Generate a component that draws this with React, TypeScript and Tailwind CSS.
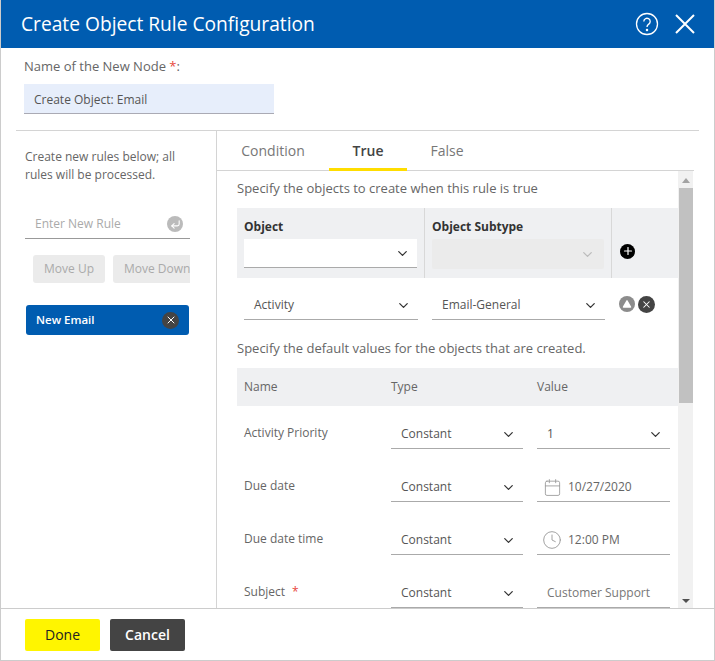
import React from "react";
import { ChevronDown, X, Calendar, Clock, CornerDownLeft, Plus, Triangle } from "lucide-react";

const rows = [
  { name: "Activity Priority", kind: "select", value: "1" },
  { name: "Due date", kind: "date", value: "10/27/2020" },
  { name: "Due date time", kind: "time", value: "12:00 PM" },
  { name: "Subject", kind: "text", value: "Customer Support", required: true },
];

const Select = ({ value, className }: { value?: string; className: string }) => (
  <div className={`flex h-[29px] items-center justify-between border-b border-[#aaaaaa] pl-[10px] pr-[7px] text-[12px] text-[#555555] ${className}`}>
    <span>{value}</span>
    <ChevronDown size={15} strokeWidth={2} className="text-[#333333]" />
  </div>
);

const App = () => {
  return (
    <div className="flex h-[661px] w-[715px] flex-col border-x border-b border-[#cccccc] bg-white font-['Open_Sans',sans-serif] text-[#555555]">
      {/* header */}
      <div className="flex h-[48px] shrink-0 items-center justify-between bg-[#005cb0] pl-[20px] pr-[19px] text-white">
        <h1 className="text-[19.2px] leading-none">Create Object Rule Configuration</h1>
        <div className="flex items-center gap-[16px]">
          <svg width="24" height="24" viewBox="0 0 24 24" fill="none" stroke="white" strokeWidth="1.3">
            <circle cx="12" cy="12" r="10.5" />
            <path d="M8.8 9.4a3.2 3.2 0 1 1 5 2.7c-1.2.8-1.8 1.4-1.8 2.9" />
            <circle cx="12" cy="18" r=".6" fill="white" />
          </svg>
          <svg width="20" height="20" viewBox="0 0 20 20" fill="none" stroke="white" strokeWidth="2">
            <path d="M1 1l18 18M19 1L1 19" />
          </svg>
        </div>
      </div>

      {/* node name */}
      <div className="h-[82px] shrink-0 pl-[23px] pt-[9px]">
        <div className="text-[13px] leading-[18px] text-[#666666]">
          Name of the New Node <span className="text-[#e8483b]">*</span>:
        </div>
        <div className="mt-[9px] flex h-[30px] w-[250px] items-center border-b border-[#aaaab4] bg-[#e7eefb] pl-[10px] pt-[2px] text-[12px] text-[#555555]">
          Create Object: Email
        </div>
      </div>

      <div className="ml-[15px] mr-[15px] flex min-h-0 flex-1 border-t border-[#d4d4d4]">
        {/* rules */}
        <div className="w-[201px] shrink-0 border-r border-[#d4d4d4] pl-[9px] pt-[17px]">
          <p className="w-[165px] text-[12px] leading-[18px] text-[#666666]">
            Create new rules below; all rules will be processed.
          </p>
          <div className="mt-[22px] flex h-[33px] w-[165px] items-center justify-between border-b border-[#999999] pl-[10px] pr-[7px] pt-[4px] text-[12px] text-[#aaaaaa]">
            <span>Enter New Rule</span>
            <span className="flex h-[16px] w-[16px] items-center justify-center rounded-full bg-[#bbbbbb]">
              <CornerDownLeft size={11} strokeWidth={2.4} className="text-white" />
            </span>
          </div>
          <div className="mt-[16px] flex w-[165px] gap-[8px] overflow-hidden pl-[8px] text-[12px] text-[#aaaaaa]">
            <div className="flex h-[28px] w-[72px] shrink-0 items-center justify-center rounded-[3px] bg-[#ebebeb]">Move Up</div>
            <div className="flex h-[28px] w-[85px] shrink-0 items-center whitespace-nowrap rounded-[3px] bg-[#ebebeb] pl-[11px]">Move Down</div>
          </div>
          <div className="ml-[1px] mt-[22px] flex h-[30px] w-[163px] items-center justify-between rounded-[3px] bg-[#005cb0] pl-[10px] pr-[10px] text-[11.5px] font-semibold text-white">
            <span>New Email</span>
            <span className="flex h-[17px] w-[17px] items-center justify-center rounded-full bg-[#444444]">
              <X size={12} strokeWidth={2} />
            </span>
          </div>
        </div>

        {/* tabs and content */}
        <div className="flex w-[476px] min-w-0 flex-col">
          <div className="flex h-[40px] w-[477px] shrink-0 border-b border-[#d4d4d4] text-[14px] text-[#777777]">
            <div className="flex h-[40px] w-[112px] items-center justify-center pb-[2px]">Condition</div>
            <div className="flex h-[40px] w-[78px] items-center justify-center border-b-[3px] border-[#ffdd00] pt-[1px] font-semibold text-[#444444]">True</div>
            <div className="flex h-[40px] w-[82px] items-center justify-center pb-[2px] pr-[2px]">False</div>
          </div>

          <div className="flex min-h-0 flex-1">
            <div className="min-w-0 flex-1 overflow-hidden pl-[20px] text-[12px]">
              <p className="h-[37px] pt-[8px] text-[13px] leading-[18px] text-[#666666]">Specify the objects to create when this rule is true</p>
              {/* object header */}
              <div className="flex h-[70px] bg-[#eff0f2]">
                <div className="w-[188px] border-r border-[#d8d8d8] pl-[7px] pt-[10px]">
                  <div className="text-[12px] font-bold leading-[17px] text-[#333333]">Object</div>
                  <Select className="mt-[4px] w-[173px] border-[#999999] bg-white" />
                </div>
                <div className="w-[187px] border-r border-[#d8d8d8] pl-[7px] pt-[10px]">
                  <div className="text-[12px] font-bold leading-[17px] text-[#333333]">Object Subtype</div>
                  <div className="mt-[4px] flex h-[30px] w-[172px] items-center justify-end rounded-[2px] bg-[#ebebeb] pr-[9px]">
                    <ChevronDown size={15} className="text-[#bbbbbb]" />
                  </div>
                </div>
                <div className="flex flex-1 items-center pl-[8px] pt-[16px]">
                  <span className="flex h-[15px] w-[15px] items-center justify-center rounded-full bg-black">
                    <Plus size={12} strokeWidth={2.4} className="text-white" />
                  </span>
                </div>
              </div>
              {/* object row */}
              <div className="flex h-[43px] items-end pb-[1px] pl-[7px]">
                <Select value="Activity" className="w-[174px]" />
                <Select value="Email-General" className="ml-[14px] w-[173px]" />
                <div className="mb-[7px] ml-[14px] flex gap-[3px]">
                  <span className="flex h-[16px] w-[16px] items-center justify-center rounded-full bg-[#8c8c8c]">
                    <Triangle size={10} fill="white" strokeWidth={0} />
                  </span>
                  <span className="flex h-[17px] w-[17px] items-center justify-center rounded-full bg-[#444444] text-white">
                    <X size={11} strokeWidth={2.2} />
                  </span>
                </div>
              </div>
              <p className="h-[47px] pt-[18px] text-[13px] leading-[18px] text-[#666666]">Specify the default values for the objects that are created.</p>
              {/* values header */}
              <div className="grid h-[38px] grid-cols-[147px_146px_1fr] items-center bg-[#eff0f2] pl-[7px] text-[#666666]">
                <span>Name</span>
                <span>Type</span>
                <span>Value</span>
              </div>
              {/* values rows */}
              {rows.map((r, i) => (
                <div
                  key={r.name}
                  className={`grid grid-cols-[133px_132px_133px] items-end gap-x-[14px] pl-[7px] ${i === 0 ? "h-[43px]" : "h-[53px]"}`}
                >
                  <div className="mb-[7px] text-[#666666]">
                    {r.name}
                    {r.required && <span className="ml-[7px] text-[#e8483b]">*</span>}
                  </div>
                  <Select value="Constant" className="" />
                  {r.kind === "select" && <Select value={r.value} className="" />}
                  {r.kind === "text" && (
                    <div className="flex h-[29px] items-center border-b border-[#aaaaaa] pl-[10px] text-[#777777]">{r.value}</div>
                  )}
                  {(r.kind === "date" || r.kind === "time") && (
                    <div className="flex h-[29px] items-center gap-[6px] border-b border-[#aaaaaa] pl-[5px] text-[#666666]">
                      <span className="flex w-[20px] justify-center">
                        {r.kind === "date" ? (
                          <Calendar size={19} strokeWidth={1.1} className="text-[#999999]" />
                        ) : (
                          <Clock size={20} strokeWidth={1.1} className="text-[#999999]" />
                        )}
                      </span>
                      <span>{r.value}</span>
                    </div>
                  )}
                </div>
              ))}
            </div>

            {/* scrollbar */}
            <div className="flex w-[15px] shrink-0 flex-col items-center justify-between bg-[#f1f1f1] pb-[5px] pt-[7px]">
              <div className="h-0 w-0 border-x-[4px] border-b-[5px] border-x-transparent border-b-[#a3a3a3]" />
              <div className="mb-auto mt-[5px] h-[215px] w-[14px] bg-[#c1c1c1]" />
              <div className="h-0 w-0 border-x-[4px] border-t-[4px] border-x-transparent border-t-[#505050]" />
            </div>
          </div>
        </div>
      </div>

      {/* footer */}
      <div className="flex h-[52px] shrink-0 items-start gap-[10px] border-t border-[#cccccc] pl-[24px] pt-[10px] text-[14px]">
        <button className="h-[32px] w-[75px] rounded-[2px] bg-[#fff500] pb-[2px] text-[#222222]">Done</button>
        <button className="h-[32px] w-[75px] rounded-[2px] bg-[#444444] pb-[2px] font-semibold text-white">Cancel</button>
      </div>
    </div>
  );
};

export default App;
